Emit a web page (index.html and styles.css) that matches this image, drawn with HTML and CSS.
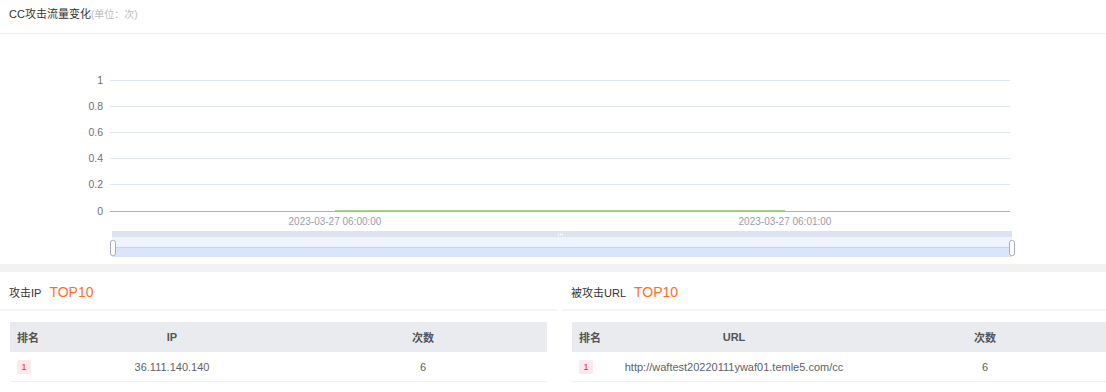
FILE: index.html
```html
<!DOCTYPE html>
<html lang="zh-CN">
<head>
    <meta charset="UTF-8">
    <meta name="viewport" content="width=device-width, initial-scale=1.0">
    <title>CC攻击统计</title>
    <link rel="stylesheet" href="styles.css">
</head>
<body>

    <div class="trend-card">
        <div class="card-title">CC攻击流量变化<span class="unit">(单位：次)</span></div>
        <svg class="chart" width="1106" height="230" viewBox="0 0 1106 230">
            <!-- split lines -->
            <g stroke="#e0e6f1" stroke-width="1">
                <line x1="110" y1="46.5" x2="1010" y2="46.5"/>
                <line x1="110" y1="72.5" x2="1010" y2="72.5"/>
                <line x1="110" y1="98.5" x2="1010" y2="98.5"/>
                <line x1="110" y1="124.5" x2="1010" y2="124.5"/>
                <line x1="110" y1="150.5" x2="1010" y2="150.5"/>
            </g>
            <g class="y-label" text-anchor="end">
                <text x="103" y="50">1</text>
                <text x="103" y="76">0.8</text>
                <text x="103" y="102">0.6</text>
                <text x="103" y="128">0.4</text>
                <text x="103" y="154">0.2</text>
                <text x="103" y="181">0</text>
            </g>
            <!-- axis + series -->
            <line x1="110" y1="177.5" x2="1010" y2="177.5" stroke="#aab0ba" stroke-width="1"/>
            <line x1="335" y1="176.5" x2="785" y2="176.5" stroke="#a5d78e" stroke-width="1"/>
            <g class="x-label" text-anchor="middle">
                <text x="335" y="191">2023-03-27 06:00:00</text>
                <text x="785" y="191">2023-03-27 06:01:00</text>
            </g>
            <!-- data zoom -->
            <rect x="112" y="197" width="900" height="6" fill="#dde3f1"/>
            <rect x="112" y="203" width="900" height="10" fill="#eef3fe"/>
            <rect x="112" y="213" width="900" height="10" fill="#dae5fc"/>
            <line x1="112" y1="213.5" x2="1012" y2="213.5" stroke="#c6d5f6" stroke-width="1"/>
            <g fill="#fff">
                <rect x="558" y="199.5" width="1" height="2"/>
                <rect x="560" y="199.5" width="1" height="2"/>
                <rect x="562" y="199.5" width="1" height="2"/>
            </g>
            <g fill="#fff" stroke="#a7adb8" stroke-width="1">
                <rect x="110.5" y="206.5" width="5" height="15" rx="2"/>
                <rect x="1009.5" y="206.5" width="5" height="15" rx="2"/>
            </g>
        </svg>
    </div>

    <div class="divider"></div>

    <div class="panels">
        <div class="panel">
            <div class="panel-title">攻击IP <span class="top">TOP10</span></div>
            <div class="rank-table">
                <div class="thead">
                    <div class="col-rank">排名</div>
                    <div class="col-main">IP</div>
                    <div class="col-count">次数</div>
                </div>
                <div class="row">
                    <div class="col-rank"><span class="badge">1</span></div>
                    <div class="col-main">36.111.140.140</div>
                    <div class="col-count">6</div>
                </div>
            </div>
        </div>
        <div class="panel">
            <div class="panel-title">被攻击URL <span class="top">TOP10</span></div>
            <div class="rank-table">
                <div class="thead">
                    <div class="col-rank">排名</div>
                    <div class="col-main">URL</div>
                    <div class="col-count">次数</div>
                </div>
                <div class="row">
                    <div class="col-rank"><span class="badge">1</span></div>
                    <div class="col-main">http://waftest20220111ywaf01.temle5.com/cc</div>
                    <div class="col-count">6</div>
                </div>
            </div>
        </div>
    </div>

</body>
</html>
```

FILE: styles.css
```css
    body {
        font-family: "Liberation Sans", "Noto Sans CJK SC", sans-serif;
        background-color: #fff;
        margin: 0;
        padding: 0;
        width: 1106px;
        height: 392px;
        overflow: hidden;
        color: #333;
    }
    .trend-card {
        height: 264px;
    }
    .card-title {
        height: 26px;
        padding: 7px 0 0 9px;
        font-size: 11px;
        line-height: 14px;
        border-bottom: 1px solid #f0f0f0;
    }
    .card-title .unit {
        font-size: 10px;
        color: #bdbdbd;
    }
    .chart {
        display: block;
    }
    .y-label text {
        font-size: 10.5px;
        fill: #6e7079;
    }
    .x-label text {
        font-size: 10px;
        fill: #9a9ea8;
    }
    .divider {
        height: 8px;
        background-color: #f2f2f2;
    }

    /* bottom TOP10 panels */
    .panels {
        display: flex;
        gap: 5px;
        width: 1119px;
    }
    .panel {
        flex: none;
        width: 537px;
        padding: 0 10px;
    }
    .panel-title {
        display: flex;
        align-items: center;
        height: 34px;
        padding: 3px 0 0 0;
        margin: 0 -10px;
        padding-left: 9px;
        font-size: 11px;
        border-bottom: 2px solid #f4f4f4;
    }
    .panel-title .top {
        margin-left: 8px;
        font-size: 14px;
        color: #ff6f2c;
    }
    .rank-table {
        margin-top: 11px;
        font-size: 11px;
    }
    .thead, .row {
        display: grid;
        grid-template-columns: 35px 1fr 248px;
        align-items: center;
    }
    .thead {
        height: 30px;
        background-color: #e9ebef;
        color: #555;
        font-weight: bold;
    }
    .row {
        height: 29px;
        color: #606266;
        border-bottom: 1px solid #eef0f3;
    }
    .col-rank {
        padding-left: 7px;
    }
    .col-main, .col-count {
        text-align: center;
    }
    .badge {
        display: inline-block;
        width: 14px;
        height: 14px;
        line-height: 14px;
        text-align: center;
        font-size: 9px;
        color: #f5222d;
        background-color: #fde8eb;
        border-radius: 2px;
    }
```
